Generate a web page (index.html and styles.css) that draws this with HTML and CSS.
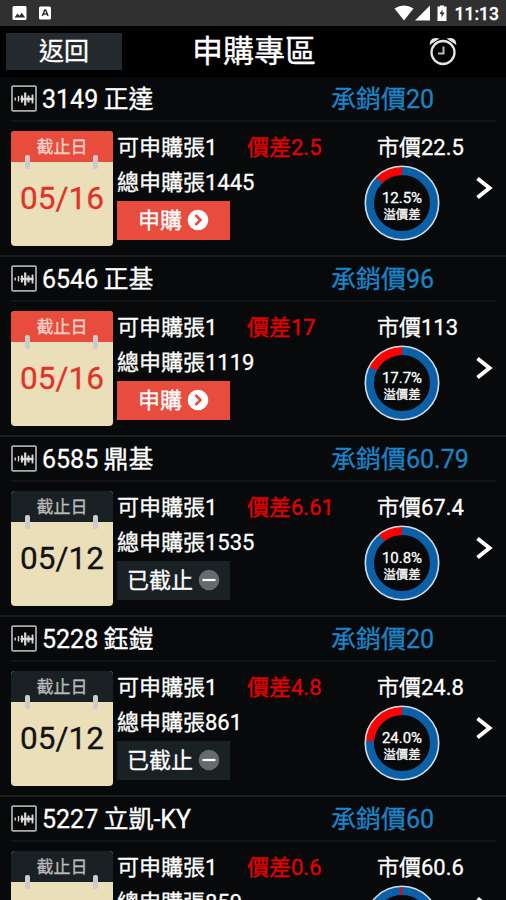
FILE: index.html
```html
<!DOCTYPE html>
<html lang="zh-Hant">
  <head>
    <meta charset="UTF-8" />
    <meta name="viewport" content="width=device-width, initial-scale=1.0" />
    <title>申購專區</title>
    <link rel="stylesheet" href="styles.css">
  </head>
  <body>
    <div class="status-bar">
      <svg class="status-left" width="60" height="26" viewBox="0 0 60 26">
        <rect x="12.500" y="6" width="14" height="14" rx="1.500" fill="#fff" />
        <path d="M14.500 17.500l3-4 2 2.200 2.200-3 3.500 4.800z" fill="#303030" />
        <rect x="39" y="6.500" width="12" height="13" rx="1.500" fill="#fff" />
        <path d="M42.300 16l2.400-6h1l2.300 6M43.500 14h3.500" fill="none" stroke="#303030" stroke-width="1.500" />
      </svg>
      <div class="status-right">
        <svg width="56" height="26" viewBox="0 0 56 26">
          <path d="M0.500 8.500Q10 2.500 19.500 8.500L10 20.500z" fill="#fff" />
          <path d="M36 5.500V20.500H21z" fill="#fff" />
          <path d="M46 6.500V5.500h4v1h2.500v14.500h-9v-14.500z" fill="#fff" />
          <path d="M48.500 9.500l-3 4.500h2v3.500l3-5h-2z" fill="#303030" />
        </svg>
        <span class="clock">11:13</span>
      </div>
    </div>

    <div class="header">
      <button class="back">返回</button>
      <h1>申購專區</h1>
      <svg class="alarm" width="28" height="30" viewBox="0 0 28 30" fill="none" stroke="#e4e4e4">
        <circle cx="14" cy="15.500" r="11.500" stroke-width="2.300" />
        <path d="M14.500 9.500V16.500H9" stroke-width="2" stroke="#bbb" />
        <path d="M1.500 6.500Q2 1 8.500 2z M26.500 6.500Q26 1 19.500 2z" fill="#e4e4e4" stroke-width="1.500" />
      </svg>
    </div>

    <div class="list" id="list"></div>

    <script>
      const stocks = [
        { id: "3149", name: "正達", price: "20", date: "05/16", total: "1445", diff: "2.5", market: "22.5", rate: 12.5, open: true },
        { id: "6546", name: "正基", price: "96", date: "05/16", total: "1119", diff: "17", market: "113", rate: 17.7, open: true },
        { id: "6585", name: "鼎基", price: "60.79", date: "05/12", total: "1535", diff: "6.61", market: "67.4", rate: 10.8, open: false },
        { id: "5228", name: "鈺鎧", price: "20", date: "05/12", total: "861", diff: "4.8", market: "24.8", rate: 24.0, open: false },
        { id: "5227", name: "立凱-KY", price: "60", date: "05/12", total: "859", diff: "0.6", market: "60.6", rate: 1.0, open: false },
      ];

      const openIcon = `
        <svg width="22" height="22" viewBox="0 0 22 22">
          <circle cx="11" cy="11" r="10.300" fill="#fff" />
          <path d="M8.500 6l5 5-5 5" fill="none" stroke="#e84c3d" stroke-width="2.500" />
        </svg>`;
      const closedIcon = `
        <svg width="22" height="22" viewBox="0 0 22 22">
          <circle cx="11" cy="11" r="10.300" fill="#666a6c" />
          <path d="M4.500 11h13" stroke="#fff" stroke-width="2.200" />
        </svg>`;

      // red part runs counterclockwise from the top
      function ring(rate) {
        return `
          <svg width="76" height="76" viewBox="0 0 76 76" fill="none">
            <circle cx="38" cy="38" r="32.500" stroke="#0c60a8" stroke-width="9" />
            <circle cx="38" cy="38" r="32.500" stroke="#ff0000" stroke-width="9" pathLength="100"
              stroke-dasharray="${rate} 100" transform="matrix(0 -1 -1 0 76 76)" />
            <circle cx="38" cy="38" r="36.700" stroke="#cfdde6" stroke-width="1.600" />
          </svg>`;
      }

      document.getElementById("list").innerHTML = stocks.map((s) => `
        <div class="item ${s.open ? "open" : "closed"}">
          <div class="item-head">
            <svg class="wave" width="26" height="27" viewBox="0 0 26 27" fill="none" stroke="#d8d8d8">
              <rect x="1" y="1.200" width="24" height="24.600" rx="1" stroke="#aaa" stroke-width="1.800" />
              <path d="M4.200 12.500v3M7.500 11v5.500" stroke-width="1.400" />
              <path d="M11 10.500v7M17.500 10.500v7" stroke-width="2" />
              <path d="M14.200 7.500v13" stroke-width="2.200" />
              <path d="M9.500 14h13" stroke-width="2.600" />
              <path d="M21.500 9.500v9" stroke-width="1.800" />
            </svg>
            <span class="name">${s.id} ${s.name}</span>
            <span class="price">承銷價${s.price}</span>
          </div>
          <div class="item-body">
            <div class="calendar">
              <div class="calendar-top">截止日</div>
              <div class="calendar-date">${s.date}</div>
            </div>
            <div class="info">
              <div class="line">
                <span class="quota">可申購張1</span>
                <span class="diff">價差${s.diff}</span>
              </div>
              <div class="line">總申購張${s.total}</div>
              <button class="action">${s.open ? "申購" + openIcon : "已截止" + closedIcon}</button>
            </div>
            <div class="market">
              <div class="line">市價${s.market}</div>
              <div class="ring">
                ${ring(s.rate)}
                <div class="ring-label">
                  <span class="rate">${s.rate.toFixed(1)}%</span>
                  <span class="rate-name">溢價差</span>
                </div>
              </div>
            </div>
            <svg class="arrow" width="17" height="24" viewBox="0 0 17 24">
              <path d="M1.500 2.500L13.500 12 1.500 21.500" fill="none" stroke="#fff" stroke-width="4" />
            </svg>
          </div>
        </div>`).join("");
    </script>
  </body>
</html>
```
FILE: styles.css
```css
* {
  box-sizing: border-box;
}
body {
  margin: 0;
  height: 900px;
  overflow: hidden;
  background-color: #07090a;
  color: #fff;
  font-family: Roboto, "Noto Sans CJK TC", sans-serif;
  -webkit-text-stroke: 0.3px;
}
svg {
  display: block;
  flex: none;
}
button {
  border: none;
  padding: 0;
  color: #fff;
  font-family: inherit;
  -webkit-text-stroke: 0.3px;
}
.status-bar {
  display: flex;
  justify-content: space-between;
  height: 26px;
  background-color: #303030;
}
.status-right {
  display: flex;
  gap: 5px;
  padding-right: 7px;
}
.clock {
  font-size: 17.5px;
  font-weight: 500;
  line-height: 28px;
}
.header {
  display: grid;
  grid-template-columns: 116px 264px 1fr;
  align-items: center;
  height: 51px;
  padding-left: 6px;
  background-color: #000;
}
.back {
  width: 116px;
  height: 37px;
  background-color: #23292c;
  font-size: 25px;
  line-height: 37px;
}
h1 {
  margin: 0;
  font-size: 31px;
  font-weight: 400;
  line-height: 50px;
  padding-top: 1px;
  text-align: center;
}
.alarm {
  margin-left: 43px;
}
.list {
  height: 823px;
  overflow: hidden;
}
.item {
  height: 180px;
  border-bottom: 2px solid #1c1e20;
}
.item-head {
  display: flex;
  align-items: center;
  height: 45px;
  margin: 0 10px 0 11px;
  border-bottom: 2px solid #121416;
  font-size: 25px;
  line-height: 43px;
}
.name {
  width: 289px;
  margin-left: 5px;
  padding-top: 2px;
  word-spacing: -1px;
}
.price {
  padding-top: 2px;
  color: #1c83c6;
}
.item-body {
  display: flex;
  padding: 9px 0 0 11px;
}
.calendar {
  width: 102px;
  height: 115px;
  border-radius: 4px;
  overflow: hidden;
  background-color: #ebdfba;
  text-align: center;
}
.calendar-top {
  position: relative;
  height: 31px;
  background-color: #e84c3d;
  color: #f5d5cc;
  font-size: 17px;
  line-height: 32px;
}
.calendar-top::before,
.calendar-top::after {
  content: "";
  position: absolute;
  top: 24px;
  width: 5px;
  height: 14px;
  border-radius: 2px;
  background-color: #cbcbcf;
}
.calendar-top::before {
  left: 14px;
}
.calendar-top::after {
  right: 15px;
}
.calendar-date {
  color: #e03328;
  font-size: 31.5px;
  line-height: 73px;
}
.closed .calendar-top {
  background-color: #1a2125;
  color: #bbb;
}
.closed .calendar-date {
  color: #111;
}
.info {
  width: 265px;
  padding-left: 4px;
}
.line {
  display: flex;
  height: 35px;
  font-size: 22px;
  line-height: 33px;
  white-space: nowrap;
}
.quota {
  width: 130px;
}
.diff {
  color: #e60000;
}
.action {
  display: flex;
  align-items: center;
  justify-content: center;
  gap: 5px;
  width: 113px;
  height: 39px;
  background-color: #e84c3d;
  font-size: 22px;
  line-height: 38px;
}
.action svg {
  margin-top: -2px;
}
.closed .action {
  background-color: #1a2125;
}
.market {
  width: 98px;
  margin-left: -1px;
  margin-right: 1px;
}
.ring {
  position: relative;
  width: 76px;
  height: 76px;
  margin: -1px 0 0 -13px;
}
.ring-label {
  position: absolute;
  inset: 0;
  display: flex;
  flex-direction: column;
  align-items: center;
  padding-top: 24px;
}
.rate {
  font-size: 15px;
  line-height: 18px;
}
.rate-name {
  font-size: 12.3px;
  line-height: 17px;
}
.arrow {
  margin-top: 45px;
}
```
